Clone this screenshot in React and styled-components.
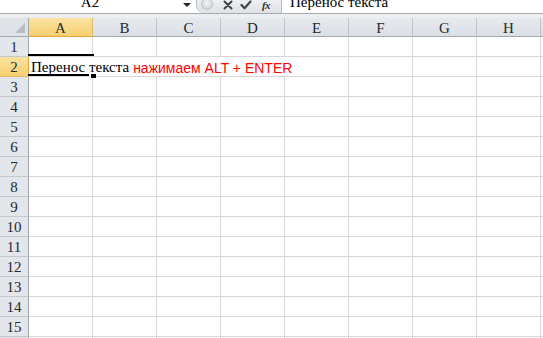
import React from "react";
import styled, { createGlobalStyle } from "styled-components";

const Global = createGlobalStyle`
  html, body { margin: 0; padding: 0; background: #ffffff; overflow: hidden; }
  body { width: 543px; height: 338px; }
`;

const Page = styled.div`
  width: 543px;
  height: 338px;
  overflow: hidden;
  background: #ffffff;
  display: flex;
  flex-direction: column;
`;

const FormulaBar = styled.div`
  height: 13px;
  flex: none;
  display: flex;
  align-items: stretch;
  background: #ffffff;
  border-bottom: 1px solid #a7abb0;
  overflow: hidden;
`;

const NameBox = styled.div`
  width: 180px;
  flex: none;
  display: flex;
  justify-content: center;
  overflow: hidden;
`;

const BarText = styled.span`
  display: block;
  margin-top: -4px;
  line-height: 13px;
  font-family: "Liberation Serif", serif;
  font-size: 15px;
  color: #000;
  white-space: nowrap;
`;

const DropZone = styled.div`
  width: 14px;
  flex: none;
  display: flex;
  align-items: center;
  justify-content: center;
`;

const Arrow = styled.div`
  width: 0;
  height: 0;
  border-left: 4px solid transparent;
  border-right: 4px solid transparent;
  border-top: 4px solid #222;
  margin-top: -3px;
`;

const ButtonTab = styled.div`
  width: 86px;
  flex: none;
  margin-left: 2px;
  background: linear-gradient(#eef0f3, #dfe2e6);
  border-left: 1px solid #b8bcc2;
  border-right: 1px solid #b8bcc2;
  border-radius: 0 0 0 8px;
  display: flex;
  align-items: center;
  padding-left: 4px;
  box-sizing: border-box;
`;

const RoundBtn = styled.div`
  width: 10px;
  height: 10px;
  border-radius: 50%;
  margin-top: -6px;
  background: radial-gradient(circle at 50% 40%, #f4f5f7, #c8ccd2);
  border: 1px solid #c0c4ca;
`;

const IconSlot = styled.div`
  width: ${(p) => p.$w}px;
  flex: none;
  display: flex;
  justify-content: center;
  align-items: center;
  margin-left: ${(p) => p.$ml || 0}px;
`;

const Fx = styled.span`
  font-family: "Liberation Serif", serif;
  font-style: italic;
  font-weight: bold;
  font-size: 11px;
  color: #333;
  line-height: 11px;
  margin-top: -2px;
  letter-spacing: -0.5px;
`;

const FormulaInput = styled.div`
  flex: 1;
  padding-left: 8px;
  overflow: hidden;
`;

const Band = styled.div`
  height: 4px;
  flex: none;
  background: #eceef1;
`;

const Sheet = styled.div`
  position: relative;
  display: grid;
  grid-template-columns: 29px repeat(8, 64px) 30px;
  grid-template-rows: 19px repeat(15, 20px) 20px;
`;

const Corner = styled.div`
  background: #dfe2e7;
  border-right: 1px solid #a3a8ae;
  border-bottom: 1px solid #a3a8ae;
  position: relative;
  &::after {
    content: "";
    position: absolute;
    right: 3px;
    bottom: 3px;
    width: 0;
    height: 0;
    border-left: 10px solid transparent;
    border-bottom: 10px solid #b9bdc3;
  }
`;

const ColHead = styled.div`
  background: ${(p) =>
    p.$active
      ? "linear-gradient(#fbe3a3, #f6cf70)"
      : "linear-gradient(#e6e9ed, #dcdfe4)"};
  border-right: 1px solid ${(p) => (p.$active ? "#e5b95d" : "#bfc3c8")};
  border-bottom: 1px solid ${(p) => (p.$active ? "#f0a23a" : "#a3a8ae")};
  display: flex;
  align-items: center;
  justify-content: center;
  font-family: "Liberation Serif", serif;
  font-size: 15px;
  color: #26292d;
  padding-top: 2px;
  box-sizing: border-box;
`;

const RowHead = styled.div`
  background: ${(p) =>
    p.$active ? "linear-gradient(#fbe3a3, #f6cf70)" : "#e3e6ea"};
  border-right: 1px solid ${(p) => (p.$active ? "#f0a23a" : "#a3a8ae")};
  border-bottom: 1px solid ${(p) => (p.$active ? "#e5b95d" : "#c6cacf")};
  display: flex;
  align-items: center;
  justify-content: center;
  font-family: "Liberation Serif", serif;
  font-size: 15px;
  color: #26292d;
  padding-top: 1px;
  box-sizing: border-box;
`;

const Cell = styled.div`
  border-right: 1px solid #d6d6d6;
  border-bottom: 1px solid #d6d6d6;
  background: #fff;
  grid-column: ${(p) => (p.$span ? `span ${p.$span}` : "auto")};
  display: flex;
  align-items: center;
  white-space: nowrap;
  overflow: visible;
  padding-left: ${(p) => (p.$span ? 2 : 0)}px;
  padding-top: 1px;
  box-sizing: border-box;
`;

const BlankCell = styled.div`
  border-bottom: 1px solid #d6d6d6;
  background: #fff;
`;

const Black = styled.span`
  font-family: "Liberation Serif", serif;
  font-size: 15px;
  color: #000;
`;

const Red = styled.span`
  font-family: "Liberation Sans", sans-serif;
  font-size: 14px;
  color: #ff0000;
  margin-left: 4px;
  margin-top: 1px;
`;

const SelTop = styled.div`
  position: absolute;
  left: 28px;
  top: 36px;
  width: 66px;
  height: 2px;
  background: #000;
`;

const SelBottom = styled.div`
  position: absolute;
  left: 28px;
  top: 56px;
  width: 61px;
  height: 2px;
  background: #000;
`;

const Handle = styled.div`
  position: absolute;
  left: 90px;
  top: 56px;
  width: 5px;
  height: 4px;
  background: #000;
  border-left: 1px solid #fff;
`;

const cols = ["A", "B", "C", "D", "E", "F", "G", "H"];

export default function App() {
  const rows = Array.from({ length: 16 }, (_, i) => i + 1);
  return (
    <>
      <Global />
      <Page>
        <FormulaBar>
          <NameBox>
            <BarText>A2</BarText>
          </NameBox>
          <DropZone>
            <Arrow />
          </DropZone>
          <ButtonTab>
            <RoundBtn />
            <IconSlot $w={18} $ml={6}>
              <svg width="10" height="10" viewBox="0 0 10 10" style={{ marginTop: -4 }}>
                <path d="M1.5 1.5 L8.5 8.5 M8.5 1.5 L1.5 8.5" stroke="#444" strokeWidth="2" strokeLinecap="round" />
              </svg>
            </IconSlot>
            <IconSlot $w={18}>
              <svg width="12" height="10" viewBox="0 0 12 10" style={{ marginTop: -4 }}>
                <path d="M1.5 5 L4.5 8.3 L10.5 1.5" stroke="#444" strokeWidth="2.2" fill="none" strokeLinecap="round" strokeLinejoin="round" />
              </svg>
            </IconSlot>
            <IconSlot $w={22}>
              <Fx>fx</Fx>
            </IconSlot>
          </ButtonTab>
          <FormulaInput>
            <BarText>Перенос текста</BarText>
          </FormulaInput>
        </FormulaBar>
        <Band />
        <Sheet>
          <Corner />
          {cols.map((c) => (
            <ColHead key={c} $active={c === "A"}>
              {c}
            </ColHead>
          ))}
          <ColHead />
          {rows.map((r) =>
            r === 2 ? (
              <React.Fragment key={r}>
                <RowHead $active>{r}</RowHead>
                <Cell $span={5}>
                  <Black>Перенос текста</Black>
                  <Red>нажимаем ALT + ENTER</Red>
                </Cell>
                <Cell />
                <Cell />
                <Cell />
                <BlankCell />
              </React.Fragment>
            ) : (
              <React.Fragment key={r}>
                <RowHead>{r}</RowHead>
                {cols.map((c) => (
                  <Cell key={c} />
                ))}
                <BlankCell />
              </React.Fragment>
            )
          )}
          <SelTop />
          <SelBottom />
          <Handle />
        </Sheet>
      </Page>
    </>
  );
}
